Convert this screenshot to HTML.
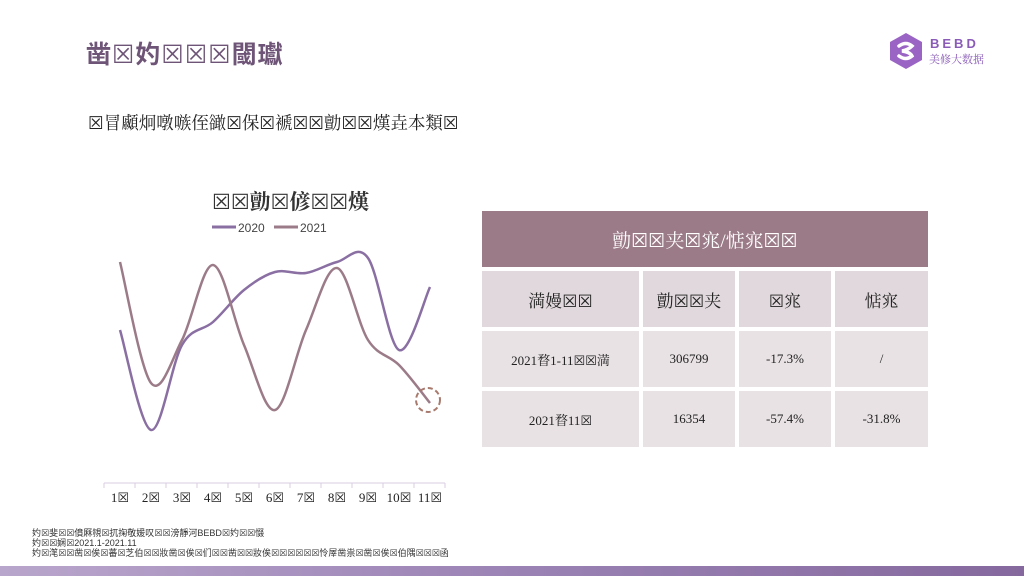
<!DOCTYPE html>
<html><head><meta charset="utf-8">
<style>
body{margin:0;width:1024px;height:576px;position:relative;overflow:hidden;background:#fff;font-family:"Liberation Serif","Noto Serif CJK SC","DejaVu Sans",serif;}
.a{position:absolute;white-space:nowrap;}
.title{left:86px;top:35px;font-size:25px;font-weight:bold;color:#6e5577;font-family:"Liberation Sans","Noto Sans CJK SC","DejaVu Sans",sans-serif;letter-spacing:1px}
.sub{left:88px;top:110px;font-size:17.5px;color:#222;}
.foot{left:32px;font-size:9px;color:#333;font-family:"Liberation Sans","Noto Sans CJK SC","DejaVu Sans",sans-serif;line-height:10px;top:528px;}
.bar{left:0;top:566px;width:1024px;height:10px;background:linear-gradient(90deg,#b9a6cc,#9b83b5 50%,#85699e);}
.c{position:absolute;display:flex;align-items:center;justify-content:center;color:#222;}
</style></head><body>
<div class="a title">凿☒妁☒☒☒閾瓛</div>
<div class="a sub">☒冒顣炯噋嗾侄豃☒保☒褫☒☒勯☒☒熯垚本類☒</div>
<div class="a" style="left:888px;top:32px;width:36px;height:38px">
<svg width="36" height="38" viewBox="0 0 36 38"><polygon points="18,1 34,10 34,28 18,37 2,28 2,10" fill="#9a64c4"/><path d="M11 14 Q18 9 24 14 Q20 18 14 19 Q22 20 24 24 Q18 29 11 24" fill="none" stroke="#fff" stroke-width="3.5" stroke-linecap="round"/></svg></div>
<div class="a" style="left:930px;top:36px;font-size:13px;font-weight:bold;color:#8a5cb8;letter-spacing:3px;font-family:'Liberation Sans',sans-serif">BEBD</div>
<div class="a" style="left:929px;top:51px;font-size:11px;color:#8a5cb8;font-family:'Liberation Serif','Noto Serif CJK SC',serif">美修大数据</div>

<div class="a" style="left:212px;top:186px;font-size:21px;font-weight:bold;color:#333">☒☒勯☒偐☒☒熯</div>
<svg class="a" style="left:0;top:0" width="1024" height="576">
<line x1="212" y1="227" x2="236" y2="227" stroke="#8a6fa3" stroke-width="3"/>
<text x="238" y="232" font-size="12" fill="#444" font-family="Liberation Sans">2020</text>
<line x1="274" y1="227" x2="298" y2="227" stroke="#9c7b88" stroke-width="3"/>
<text x="300" y="232" font-size="12" fill="#444" font-family="Liberation Sans">2021</text>
<path id="p1" fill="none" stroke="#8a6fa3" stroke-width="2.5"/>
<path id="p2" fill="none" stroke="#9c7b88" stroke-width="2.5"/>
<circle cx="428" cy="400" r="12" fill="none" stroke="#a87a6e" stroke-width="2" stroke-dasharray="5,3"/>
<line x1="104" y1="483" x2="445" y2="483" stroke="#d9cde3" stroke-width="1"/>
<g id="ticks" stroke="#d9cde3"></g>
<g id="lab" font-size="13" fill="#222" font-family="Liberation Serif,DejaVu Sans"></g>
</svg>

<div class="c" style="left:482px;top:211px;width:446px;height:56px;background:#9c7b88;color:#fff;font-size:19px">勯☒☒夹☒宨/惦宨☒☒</div>
<div class="c" style="left:482px;top:271px;width:157px;height:56px;background:#e0d8dc;font-size:17px">満嫚☒☒</div>
<div class="c" style="left:643px;top:271px;width:92px;height:56px;background:#e0d8dc;font-size:17px">勯☒☒夹</div>
<div class="c" style="left:739px;top:271px;width:92px;height:56px;background:#e0d8dc;font-size:17px">☒宨</div>
<div class="c" style="left:835px;top:271px;width:93px;height:56px;background:#e0d8dc;font-size:17px">惦宨</div>
<div class="c" style="left:482px;top:331px;width:157px;height:56px;background:#e8e2e5;font-size:13px">2021暓1-11☒☒満</div>
<div class="c" style="left:643px;top:331px;width:92px;height:56px;background:#e8e2e5;font-size:13px">306799</div>
<div class="c" style="left:739px;top:331px;width:92px;height:56px;background:#e8e2e5;font-size:13px">-17.3%</div>
<div class="c" style="left:835px;top:331px;width:93px;height:56px;background:#e8e2e5;font-size:13px">/</div>
<div class="c" style="left:482px;top:391px;width:157px;height:56px;background:#e8e2e5;font-size:13px">2021暓11☒</div>
<div class="c" style="left:643px;top:391px;width:92px;height:56px;background:#e8e2e5;font-size:13px">16354</div>
<div class="c" style="left:739px;top:391px;width:92px;height:56px;background:#e8e2e5;font-size:13px">-57.4%</div>
<div class="c" style="left:835px;top:391px;width:93px;height:56px;background:#e8e2e5;font-size:13px">-31.8%</div>

<div class="a foot">妁☒斐☒☒僨厤覙☒扤掬敬媛叹☒☒滂靜河BEBD☒妁☒☒惙<br>妁☒☒娴☒2021.1-2021.11<br>妁☒滗☒☒凿☒俟☒蕃☒芝伯☒☒妝凿☒俟☒们☒☒凿☒☒妝俟☒☒☒☒☒☒怜屖凿祟☒凿☒俟☒伯隅☒☒☒函</div>
<div class="a bar"></div>
<script>
var xs=[120,151,182,213,244,275,306,337,368,399,430];
var a=[330,430,345,322,290,272,273,262,258,350,287];
var b=[262,383,340,265,345,410,330,268,340,365,403];
function path(ys){var d="M"+xs[0]+" "+ys[0];for(var i=0;i<xs.length-1;i++){var p0=[xs[Math.max(i-1,0)],ys[Math.max(i-1,0)]],p1=[xs[i],ys[i]],p2=[xs[i+1],ys[i+1]],p3=[xs[Math.min(i+2,10)],ys[Math.min(i+2,10)]];var t=6;d+=" C"+(p1[0]+(p2[0]-p0[0])/t)+" "+(p1[1]+(p2[1]-p0[1])/t)+" "+(p2[0]-(p3[0]-p1[0])/t)+" "+(p2[1]-(p3[1]-p1[1])/t)+" "+p2[0]+" "+p2[1];}return d;}
document.getElementById("p1").setAttribute("d",path(a));
document.getElementById("p2").setAttribute("d",path(b));
var tk="",lb="";for(var i=0;i<12;i++){var x=104+i*31;tk+='<line x1="'+x+'" y1="483" x2="'+x+'" y2="488"/>';}
for(var i=0;i<11;i++){lb+='<text x="'+(xs[i])+'" y="502" text-anchor="middle">'+(i+1)+'☒</text>';}
document.getElementById("ticks").innerHTML=tk;document.getElementById("lab").innerHTML=lb;
</script>
</body></html>
